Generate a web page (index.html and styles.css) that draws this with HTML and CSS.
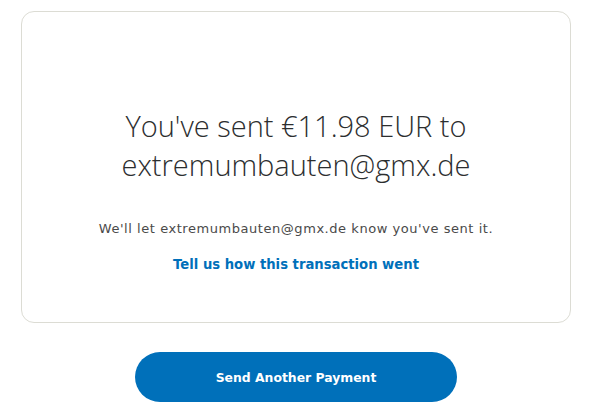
FILE: index.html
```html
<!DOCTYPE html>
<html>
<head>
<meta charset="utf-8">
<link rel="stylesheet" href="styles.css">
</head>
<body>
<main class="page">
  <section class="card">
    <h1 class="title">You've sent €11.98 EUR to extremumbauten@gmx.de</h1>
    <p class="note">We'll let extremumbauten@gmx.de know you've sent it.</p>
    <a class="link" href="#">Tell us how this transaction went</a>
  </section>
  <button class="btn">Send Another Payment</button>
</main>
</body>
</html>
```
FILE: styles.css
```css
html, body { margin: 0; padding: 0; background: #fff; }
.page {
  padding: 11px 23px 0 21px;
  display: flex;
  flex-direction: column;
  align-items: center;
}
.card {
  box-sizing: border-box;
  width: 550px;
  height: 312px;
  border: 1px solid #dcdcd4;
  border-radius: 13px;
  display: flex;
  flex-direction: column;
  align-items: center;
  padding-top: 94px;
}
.title {
  margin: 0;
  width: 380px;
  text-align: center;
  font-family: "Open Sans", sans-serif;
  font-weight: 300;
  font-size: 29px;
  line-height: 39px;
  color: #2c2e2f;
}
.note {
  margin: 37px 0 0;
  font-family: "DejaVu Sans", sans-serif;
  font-size: 13px;
  letter-spacing: 0.55px;
  color: #4a4a4a;
}
.link {
  margin-top: 21px;
  font-family: "DejaVu Sans", sans-serif;
  font-weight: bold;
  font-size: 13.2px;
  color: #0070ba;
  text-decoration: none;
}
.btn {
  margin-top: 29px;
  width: 322px;
  height: 50px;
  border: 0;
  border-radius: 25px;
  background: #0070ba;
  color: #fff;
  font-family: "DejaVu Sans", sans-serif;
  font-weight: bold;
  font-size: 12.4px;
}
```
